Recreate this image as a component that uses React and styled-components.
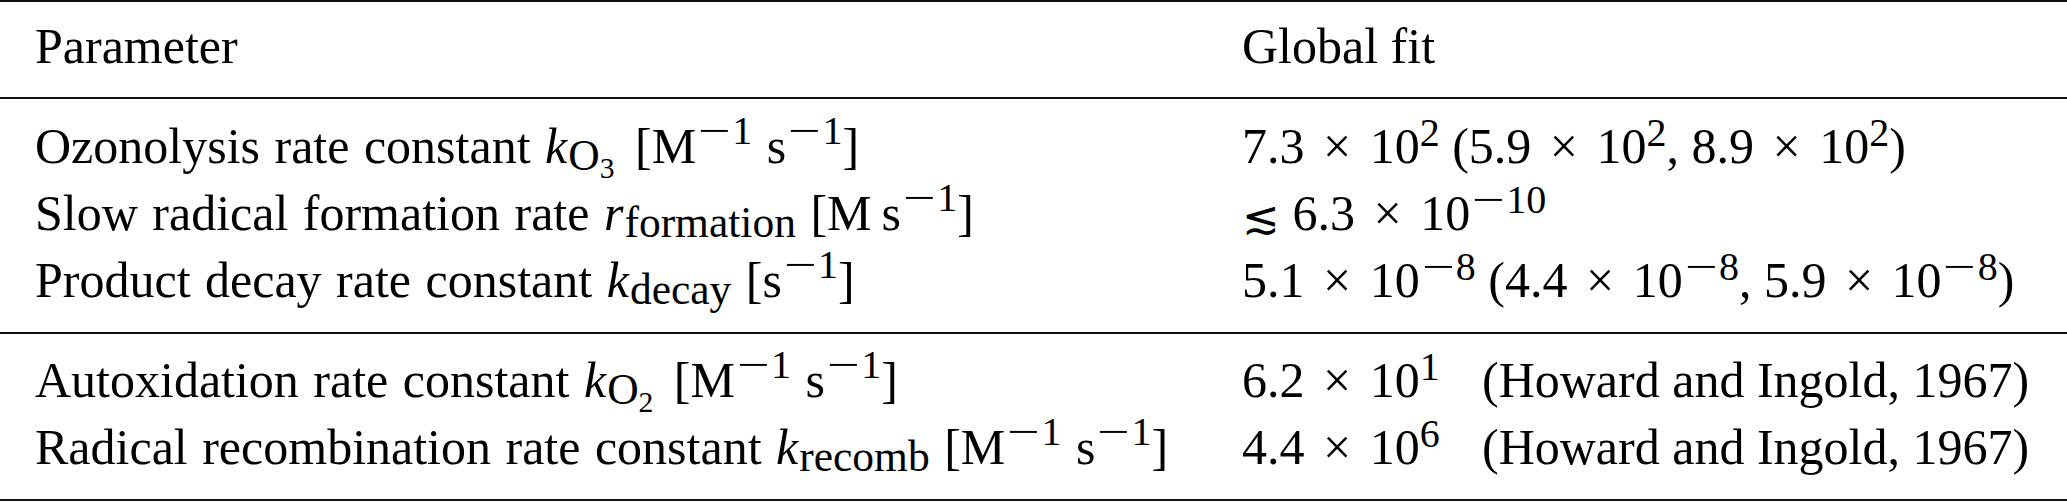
import React from 'react'
import styled, {createGlobalStyle} from 'styled-components'

const GlobalStyle = createGlobalStyle`
  body {
    margin: 0;
    background: #ffffff;
  }
`;

let Table = styled.div`
  width: 2067px;
  border-top: 2px solid #111;
  font-family: "Liberation Serif", "Times New Roman", "DejaVu Serif", serif;
  font-size: 50px;
  color: #000;
`;

let Section = styled.div`
  padding: ${p => p.$pt}px 0 ${p => p.$pb}px;
  border-bottom: 2px solid #111;
`;

let Row = styled.div`
  display: grid;
  grid-template-columns: 1242px 1fr;
  height: 67px;
  line-height: 67px;
  white-space: nowrap;
`;

let Label = styled.div`
  padding-left: 35px;
  word-spacing: 2px;
`;

let Value = styled.div``;

let Num = styled.span`
  display: inline-block;
  width: 240px;
`;

let Var = styled.span`
  font-style: italic;
  margin-right: 1px;
`;

let Sub = styled.span`
  font-size: 0.87em;
  line-height: 0;
  vertical-align: -7px;
`;

let SubSub = styled.span`
  font-size: 0.68em;
  line-height: 0;
  vertical-align: -8px;
`;

let Sup = styled.span`
  font-size: 0.8em;
  line-height: 0;
  vertical-align: ${p => p.$raise || 19}px;
  word-spacing: 0;
`;

let Unit = styled.span`
  margin-left: 0.12em;
`;

// math minus: longer than the text one
let Minus = styled.span`
  display: inline-block;
  margin: 0 0.17em;
  transform: scaleX(1.45);
`;

let Times = styled.span`
  margin: 0 0.12em;
`;

let Approx = styled.span`
  font-family: "DejaVu Serif", serif;
  font-size: 0.9em;
  line-height: 0;
  vertical-align: -3px;
`;

const neg = n => <><Minus>{'\u2212'}</Minus>{n}</>

// a number written as a × 10^e
const Sci = ({m, e}) => (
  <>{m} <Times>×</Times> 10<Sup $raise={17}>{e}</Sup></>
)

function getParams() {
  return [
    [
      {
        label: <>Ozonolysis rate constant <Var>k</Var><Sub>O<SubSub>3</SubSub></Sub> <Unit>[M<Sup>{neg(1)}</Sup> s<Sup>{neg(1)}</Sup>]</Unit></>,
        value: <><Sci m="7.3" e="2"/> (<Sci m="5.9" e="2"/>, <Sci m="8.9" e="2"/>)</>,
      },
      {
        label: <>Slow radical formation rate <Var>r</Var><Sub>formation</Sub> [M{'\u2009'}s<Sup>{neg(1)}</Sup>]</>,
        value: <><Approx>≲</Approx> <Sci m="6.3" e={neg(10)}/></>,
      },
      {
        label: <>Product decay rate constant <Var>k</Var><Sub>decay</Sub> [s<Sup>{neg(1)}</Sup>]</>,
        value: <><Sci m="5.1" e={neg(8)}/> (<Sci m="4.4" e={neg(8)}/>, <Sci m="5.9" e={neg(8)}/>)</>,
      },
    ],
    [
      {
        label: <>Autoxidation rate constant <Var>k</Var><Sub>O<SubSub>2</SubSub></Sub> <Unit>[M<Sup>{neg(1)}</Sup> s<Sup>{neg(1)}</Sup>]</Unit></>,
        value: <><Num><Sci m="6.2" e="1"/></Num>(Howard and Ingold, 1967)</>,
      },
      {
        label: <>Radical recombination rate constant <Var>k</Var><Sub>recomb</Sub> [M<Sup>{neg(1)}</Sup> s<Sup>{neg(1)}</Sup>]</>,
        value: <><Num><Sci m="4.4" e="6"/></Num>(Howard and Ingold, 1967)</>,
      },
    ],
  ]
}

function App() {
  const params = getParams()

  return (
    <>
      <GlobalStyle/>
      <Table>
        <Section $pt={11} $pb={17}>
          <Row>
            <Label>Parameter</Label>
            <Value>Global fit</Value>
          </Row>
        </Section>

        <Section $pt={14} $pb={18}>
          {params[0].map((p, i) => (
            <Row key={i}>
              <Label>{p.label}</Label>
              <Value>{p.value}</Value>
            </Row>
          ))}
        </Section>

        <Section $pt={13} $pb={18}>
          {params[1].map((p, i) => (
            <Row key={i}>
              <Label>{p.label}</Label>
              <Value>{p.value}</Value>
            </Row>
          ))}
        </Section>
      </Table>
    </>
  )
}

export default App
